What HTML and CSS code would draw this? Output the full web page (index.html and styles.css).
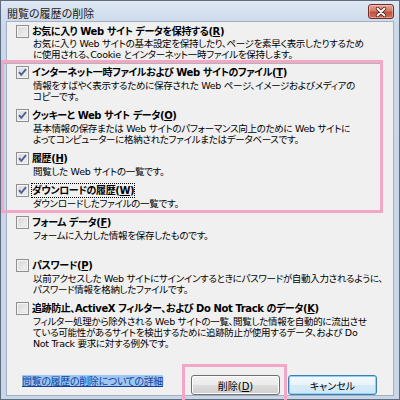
FILE: index.html
```html
<!DOCTYPE html>
<html lang="ja">
<head>
<meta charset="utf-8">
<title>閲覧の履歴の削除</title>
<link rel="stylesheet" href="styles.css">
</head>
<body>
<div class="window">
  <div class="titlebar">
    <span class="title">閲覧の履歴の削除</span>
    <span class="close">
      <svg width="24" height="12" viewBox="0 0 24 12">
        <path d="M8.5 2.5 L15.5 9.5 M15.5 2.5 L8.5 9.5" stroke="#4a1c16" stroke-width="3.4" stroke-linecap="round"/>
        <path d="M8.5 2.5 L15.5 9.5 M15.5 2.5 L8.5 9.5" stroke="#ffffff" stroke-width="1.8" stroke-linecap="round"/>
      </svg>
    </span>
  </div>
  <div class="client">
    <div class="item first">
      <div class="label-row"><span class="cb"></span><span class="label">お気に入り Web サイト データを保持する(<u>R</u>)</span></div>
      <div class="desc">お気に入り Web サイトの基本設定を保持したり、ページを素早く表示したりするため<br>に使用される、Cookie とインターネット一時ファイルを保持します。</div>
    </div>
    <div class="group">
      <div class="group-inner">
        <div class="item">
          <div class="label-row"><span class="cb checked"><svg width="11" height="11" viewBox="0 0 11 11"><path d="M2 5.2 L4.3 7.8 L9 2.2" fill="none" stroke="#4a5f97" stroke-width="1.9"/></svg></span><span class="label">インターネット一時ファイルおよび Web サイトのファイル(<u>T</u>)</span></div>
          <div class="desc">情報をすばやく表示するために保存された Web ページ、イメージおよびメディアの<br>コピーです。</div>
        </div>
        <div class="item">
          <div class="label-row"><span class="cb checked"><svg width="11" height="11" viewBox="0 0 11 11"><path d="M2 5.2 L4.3 7.8 L9 2.2" fill="none" stroke="#4a5f97" stroke-width="1.9"/></svg></span><span class="label">クッキーと Web サイト データ(<u>O</u>)</span></div>
          <div class="desc">基本情報の保存または Web サイトのパフォーマンス向上のために Web サイトに<br>よってコンピューターに格納されたファイルまたはデータベースです。</div>
        </div>
        <div class="item">
          <div class="label-row"><span class="cb checked"><svg width="11" height="11" viewBox="0 0 11 11"><path d="M2 5.2 L4.3 7.8 L9 2.2" fill="none" stroke="#4a5f97" stroke-width="1.9"/></svg></span><span class="label">履歴(<u>H</u>)</span></div>
          <div class="desc">閲覧した Web サイトの一覧です。</div>
        </div>
        <div class="item last">
          <div class="label-row"><span class="cb checked"><svg width="11" height="11" viewBox="0 0 11 11"><path d="M2 5.2 L4.3 7.8 L9 2.2" fill="none" stroke="#4a5f97" stroke-width="1.9"/></svg></span><span class="label focus">ダウンロードの履歴(<u>W</u>)</span></div>
          <div class="desc">ダウンロードしたファイルの一覧です。</div>
        </div>
      </div>
    </div>
    <div class="item">
      <div class="label-row"><span class="cb"></span><span class="label">フォーム データ(<u>F</u>)</span></div>
      <div class="desc">フォームに入力した情報を保存したものです。<br>&nbsp;</div>
    </div>
    <div class="item">
      <div class="label-row"><span class="cb"></span><span class="label">パスワード(<u>P</u>)</span></div>
      <div class="desc">以前アクセスした Web サイトにサインインするときにパスワードが自動入力されるように、<br>パスワード情報を格納したファイルです。</div>
    </div>
    <div class="item">
      <div class="label-row"><span class="cb"></span><span class="label">追跡防止、ActiveX フィルター、および Do Not Track のデータ(<u>K</u>)</span></div>
      <div class="desc">フィルター処理から除外される Web サイトの一覧、閲覧した情報を自動的に流出させ<br>ている可能性があるサイトを検出するために追跡防止が使用するデータ、および Do<br>Not Track 要求に対する例外です。</div>
    </div>
    <div class="footer">
      <span class="link">閲覧の履歴の削除についての詳細</span>
      <div class="btn-hl"><button class="btn">削除(<u>D</u>)</button></div>
      <button class="btn default">キャンセル</button>
    </div>
  </div>
</div>
</body>
</html>
```
FILE: styles.css
```css
html, body {
  margin: 0;
  padding: 0;
}
body {
  width: 400px;
  height: 400px;
  overflow: hidden;
  font-family: "Noto Sans CJK JP", "Noto Sans", sans-serif;
  font-feature-settings: "palt";
  color: #000;
}
.window {
  box-sizing: border-box;
  width: 400px;
  height: 400px;
  border: 1px solid #5e6e80;
  background: linear-gradient(#dfe8f3, #cad8e9 24px, #c8d6e7);
  padding: 0 5px 3px;
  display: flex;
  flex-direction: column;
}
.titlebar {
  height: 20px;
  flex: none;
  display: flex;
  align-items: flex-start;
  justify-content: space-between;
  padding-left: 1px;
}
.title {
  font-size: 11px;
  line-height: 12px;
  margin-top: 6px;
  white-space: nowrap;
  color: #1a1a1a;
}
.close {
  box-sizing: border-box;
  width: 26px;
  height: 15px;
  margin-top: 3px;
  border: 1px solid #6e2e26;
  border-radius: 3px;
  background: linear-gradient(#e8a595, #d47a68 45%, #c4503e 55%, #d2705c);
  box-shadow: inset 0 0 0 1px rgba(255,255,255,0.35);
  display: flex;
  align-items: center;
  justify-content: center;
}
.close svg { display: block; }
.client {
  flex: 1;
  min-height: 0;
  background: #f0f0f0;
  border: 1px solid #a3b0bf;
  padding-top: 2px;
  display: flex;
  flex-direction: column;
}
.item {
  padding-left: 9px;
  margin-bottom: 6px;
}
.item.first { margin-bottom: 0; }
.item.first .desc { margin-top: 0; }
.label-row {
  display: flex;
  align-items: center;
  height: 14px;
}
.cb {
  box-sizing: border-box;
  flex: none;
  width: 13px;
  height: 13px;
  margin-right: 3px;
  border: 1px solid #8e8f8f;
  background: linear-gradient(135deg, #d3d3d3, #f7f7f7);
  box-shadow: inset 0 0 0 1px #f4f4f4, inset 0 0 0 2px #e4e4e4;
  display: flex;
  align-items: center;
  justify-content: center;
}
.cb svg { display: block; }
.label {
  font-family: "DejaVu Sans", "Noto Sans CJK JP", sans-serif;
  font-size: 10px;
  font-weight: bold;
  letter-spacing: -0.4px;
  line-height: 13px;
  white-space: nowrap;
}
.label.focus {
  outline: 1px dotted #000;
  outline-offset: 0;
}
.desc {
  margin: 1px 0 0 17px;
  font-family: "DejaVu Sans", "Noto Sans CJK JP", sans-serif;
  font-size: 9.5px;
  letter-spacing: -0.3px;
  line-height: 11px;
  white-space: nowrap;
}
.group {
  margin: 0 10px 2px -6px;
  border: 3px solid #f2a7c7;
  padding-bottom: 1px;
}
.group-inner {
  border-top: 1px solid #b4b4b4;
  padding-top: 1px;
}
.group .item { padding-left: 12px; }
.group .item.last { margin-bottom: 0; }
.footer {
  margin-top: 9px;
  display: flex;
  align-items: flex-start;
}
.link {
  margin: 11px 0 0 15px;
  font-size: 10px;
  letter-spacing: -0.35px;
  line-height: 11px;
  white-space: nowrap;
  color: #12419c;
  background: #9fc6f2;
  text-decoration: underline;
}
.btn-hl {
  margin-left: auto;
  border: 3px solid #f2a7c7;
  padding: 8px 4px 5px 6px;
}
.btn {
  box-sizing: border-box;
  display: block;
  width: 89px;
  height: 20px;
  padding: 0;
  font-family: "DejaVu Sans", "Noto Sans CJK JP", sans-serif;
  font-feature-settings: "palt";
  font-size: 10px;
  color: #000;
  border: 1px solid #707070;
  border-radius: 3px;
  background: linear-gradient(#f2f2f2, #ebebeb 50%, #dddddd 50%, #cfcfcf);
  box-shadow: inset 0 0 0 1px #fcfcfc;
}
.btn.default {
  margin: 11px 16px 0 1px;
  border-color: #3c7fb1;
  background: linear-gradient(#f3f9fd, #e8f3fb 50%, #d6ebf8 50%, #cde6f6);
  box-shadow: inset 0 0 0 1px #8fd0f4;
}
```
